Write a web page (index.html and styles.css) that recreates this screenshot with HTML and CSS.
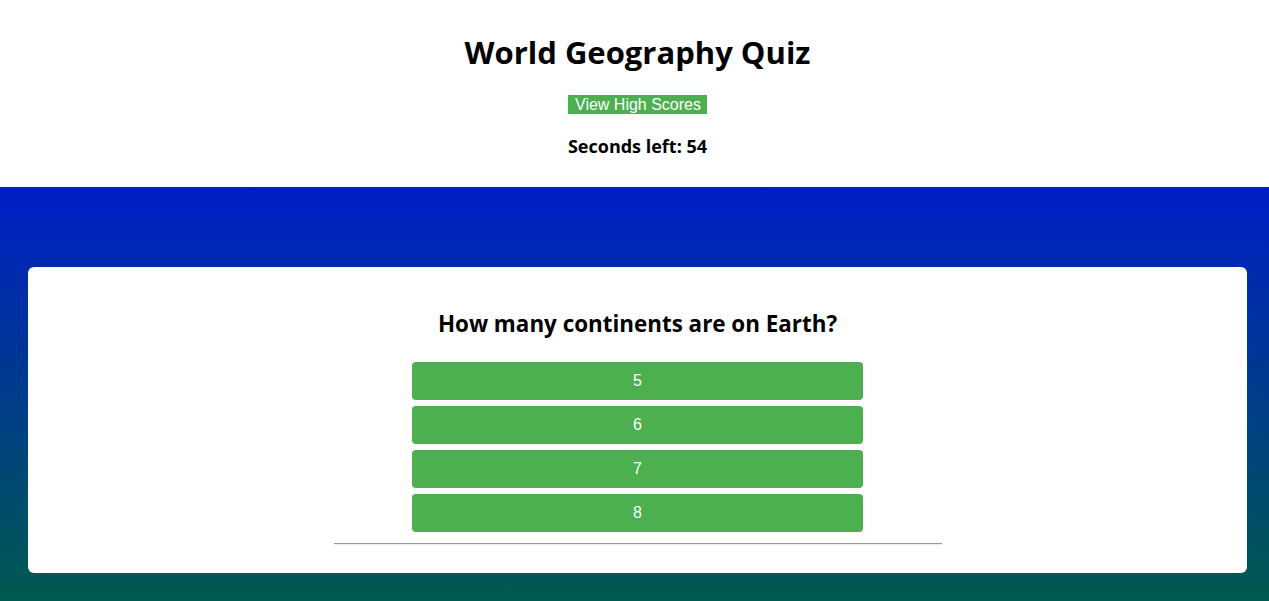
FILE: index.html
```html
<!DOCTYPE html>
<html>
<head>
<meta charset="utf-8">
<link rel="stylesheet" href="styles.css">
</head>
<body>
<header class="top">
  <h1 class="title">World Geography Quiz</h1>
  <button class="scores">View High Scores</button>
  <p class="timer">Seconds left: 54</p>
</header>
<main class="stage">
  <section class="card">
    <h2 class="question">How many continents are on Earth?</h2>
    <div class="answers">
      <button class="answer">5</button>
      <button class="answer">6</button>
      <button class="answer">7</button>
      <button class="answer">8</button>
    </div>
    <hr class="rule">
  </section>
</main>
</body>
</html>
```
FILE: styles.css
```css
html, body {
  margin: 0;
  padding: 0;
}
body {
  font-family: "Open Sans", "Noto Sans", sans-serif;
  background: #005a4e;
}
.top {
  background: #fff;
  height: 187px;
  display: flex;
  flex-direction: column;
  align-items: center;
  box-sizing: border-box;
  padding: 31px 22px 0 28px;
}
.title {
  margin: 0;
  font-size: 31px;
  font-weight: 700;
  line-height: 42px;
  color: #000;
}
.scores {
  margin-top: 22px;
  background: #4caf50;
  color: #fff;
  border: none;
  font-family: "Liberation Sans", Arial, sans-serif;
  font-size: 16px;
  line-height: 19px;
  height: 19px;
  padding: 0 6px 0 7px;
}
.timer {
  margin: 20px 0 0;
  font-size: 18px;
  font-weight: 700;
  line-height: 24px;
}
.stage {
  background: linear-gradient(#001ec8 0%, #005a4e 100%);
  height: 414px;
  box-sizing: border-box;
  padding: 80px 22px 0 28px;
}
.card {
  background: #fff;
  border-radius: 6px;
  height: 306px;
  box-sizing: border-box;
  padding-top: 42px;
  display: flex;
  flex-direction: column;
  align-items: center;
}
.question {
  margin: 0;
  font-size: 22.4px;
  font-weight: 700;
  line-height: 30px;
}
.answers {
  margin-top: 23px;
  display: flex;
  flex-direction: column;
  gap: 6px;
  width: 451px;
}
.answer {
  background: #4caf50;
  color: #fff;
  border: none;
  border-radius: 4px;
  height: 38px;
  font-family: "Liberation Sans", Arial, sans-serif;
  font-size: 16px;
  padding: 0;
}
.rule {
  width: 608px;
  margin: 11px 0 0;
  border: none;
  border-top: 1px solid #9a9a9a;
  border-bottom: 1px solid #eee;
  height: 0;
}
```
